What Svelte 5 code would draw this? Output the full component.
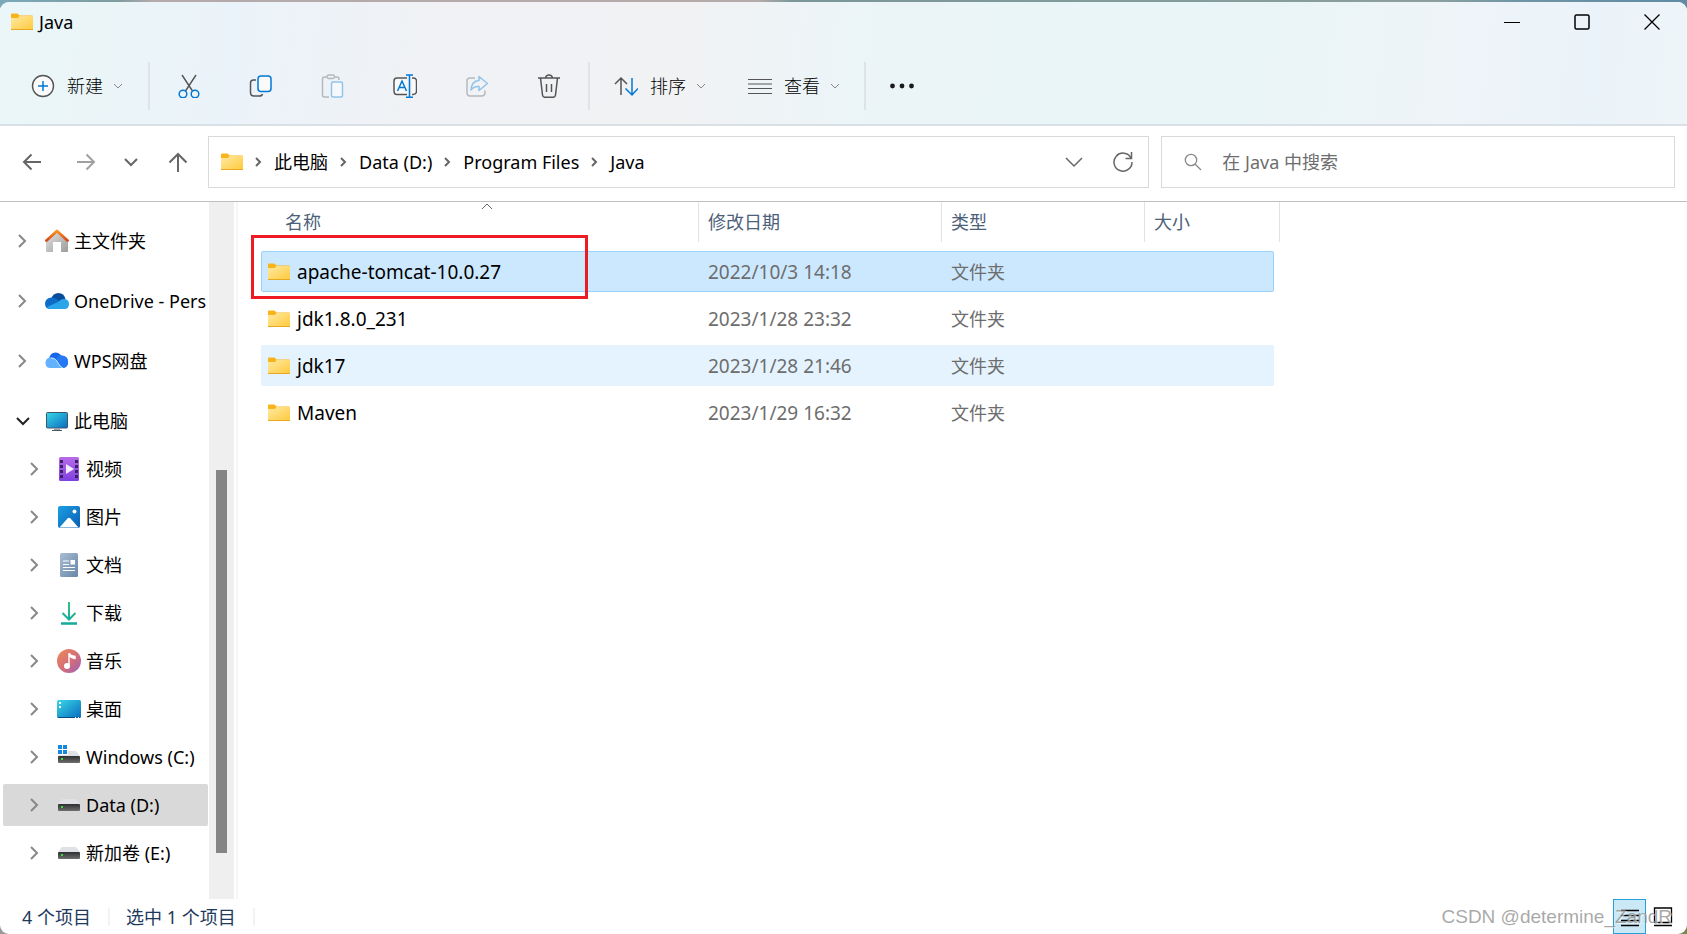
<script lang="ts">
  type TreeItem = {
    label: string;
    icon: string;
    child?: boolean;
    open?: boolean;
  };

  const tree: TreeItem[] = [
    { label: "主文件夹", icon: "home" },
    { label: "OneDrive - Pers", icon: "onedrive" },
    { label: "WPS网盘", icon: "wps" },
    { label: "此电脑", icon: "pc", open: true },
    { label: "视频", icon: "video", child: true },
    { label: "图片", icon: "picture", child: true },
    { label: "文档", icon: "document", child: true },
    { label: "下载", icon: "download", child: true },
    { label: "音乐", icon: "music", child: true },
    { label: "桌面", icon: "desktop", child: true },
    { label: "Windows (C:)", icon: "drive-win", child: true },
    { label: "Data (D:)", icon: "drive", child: true },
    { label: "新加卷 (E:)", icon: "drive", child: true },
  ];

  const files = [
    { name: "apache-tomcat-10.0.27", date: "2022/10/3 14:18", type: "文件夹" },
    { name: "jdk1.8.0_231", date: "2023/1/28 23:32", type: "文件夹" },
    { name: "jdk17", date: "2023/1/28 21:46", type: "文件夹" },
    { name: "Maven", date: "2023/1/29 16:32", type: "文件夹" },
  ];

  const crumbs = ["此电脑", "Data (D:)", "Program Files", "Java"];

  const actions = [
    { icon: "cut", label: "剪切" },
    { icon: "copy", label: "复制" },
    { icon: "paste", label: "粘贴", disabled: true },
    { icon: "rename", label: "重命名" },
    { icon: "share", label: "共享", disabled: true },
    { icon: "delete", label: "删除" },
  ];

  let current = $state("Data (D:)");
  let selected = $state("apache-tomcat-10.0.27");
  let hovered = $state("jdk17");
  let query = $state("");
</script>

{#snippet folder()}
  <svg class="folder" width="22" height="18" viewBox="0 0 22 18" aria-hidden="true">
    <path d="M0 1.5Q0 .5 1 .5H6.5L8.5 2.5H21Q22 2.5 22 3.5V6H0Z" fill="#f9b41c" />
    <path d="M0 5H7L8.500 3H22V17H0Z" fill="url(#g-folder)" />
    <path d="M0 16.500H22" stroke="#e9a820" />
  </svg>
{/snippet}

{#snippet chevron(dir: string)}
  <svg class="chev" width="14" height="14" viewBox="0 0 14 14" aria-hidden="true">
    {#if dir === "down"}
      <path d="M1 4L7 10L13 4" />
    {:else if dir === "small"}
      <path d="M3 5L7 9L11 5" stroke-width="1" />
    {:else}
      <path d="M3 1L9 7L3 13" />
    {/if}
  </svg>
{/snippet}

{#snippet icon(name: string)}
  <svg class="icon" width="24" height="24" viewBox="0 0 24 24" aria-hidden="true">
    {#if name === "new"}
      <circle cx="12" cy="12" r="10.500" fill="#fafafa" stroke="#555" stroke-width="1.400" />
      <path d="M12 7V17M7 12H17" stroke="#0078d4" stroke-width="1.500" />
    {:else if name === "cut"}
      <path d="M5 1L15.500 17M19 1L8.500 17" stroke="#555" stroke-width="1.400" />
      <circle cx="6" cy="20" r="3.800" stroke="#0078d4" stroke-width="1.500" />
      <circle cx="18" cy="20" r="3.800" stroke="#0078d4" stroke-width="1.500" />
    {:else if name === "copy"}
      <path d="M7 6H4.500Q1.500 6 1.500 9V18.500Q1.500 22 5 22H10.500Q13 22 13.500 20" stroke="#555" stroke-width="1.500" />
      <rect x="9" y="2" width="13" height="15.500" rx="3" fill="#fafafa" stroke="#0078d4" stroke-width="1.500" />
    {:else if name === "paste"}
      <path d="M6 3H3.500Q1.500 3 1.500 5V21Q1.500 23 3.500 23H8M13 3H16Q18 3 18 5V6" stroke="#b5b9bc" stroke-width="1.500" />
      <rect x="6" y="1" width="7.500" height="3.500" rx="1.700" stroke="#b5b9bc" stroke-width="1.300" />
      <rect x="10.500" y="8" width="11" height="15" rx="1.500" fill="#f6f9fb" stroke="#91c4ea" stroke-width="1.500" />
    {:else if name === "rename"}
      <path d="M14 4H4Q1 4 1 7V17Q1 20.500 4 20.500H14M19 4H20Q23.500 4 23.500 7V17Q23.500 20.500 20 20.500H19" fill="#fafafa" stroke="#555" stroke-width="1.500" />
      <path d="M4.500 17L9 7L13.500 17M6 13.500H12" stroke="#0078d4" stroke-width="1.500" />
      <path d="M16.500 1.500V23M13 1H20M13 23.300H20" stroke="#0078d4" stroke-width="1.500" />
    {:else if name === "share"}
      <path d="M10 4H5Q2 4 2 7V18.500Q2 22 5 22H16.500Q20 22 20 18.500V16.500" stroke="#b5b9bc" stroke-width="1.500" />
      <path d="M14 2.500L22.500 9.500L14 16.500V12.500Q9 12 6 16Q6.500 7 14 6.500Z" stroke="#91c4ea" stroke-width="1.500" stroke-linejoin="round" />
    {:else if name === "delete"}
      <path d="M1 4H23M8.500 4Q9 1 12 1Q15 1 15.500 4M3.500 4L5.500 21Q5.800 23.300 8 23.300H16Q18.200 23.300 18.500 21L20.500 4M9.500 10V18M14.500 10V18" stroke="#555" stroke-width="1.500" />
    {:else if name === "sort"}
      <path d="M7 21V4M1 10L7 4L13 10" stroke="#555" stroke-width="1.500" />
      <path d="M18 4V21M11.500 14.500L18 21L24 14.500" stroke="#0078d4" stroke-width="1.500" />
    {:else if name === "view"}
      <path d="M0 5.500H24M0 10H24M0 14.500H24M0 19.500H24" stroke="#555" stroke-width="1.200" />
    {:else if name === "home"}
      <path d="M1 11.500L12 2L23 11.500V22Q23 23 22 23H16V13H8V23H2Q1 23 1 22Z" fill="url(#g-home)" />
      <path d="M1.500 11.500L12 2L22.500 11.500" stroke="url(#g-roof)" stroke-width="2.800" stroke-linecap="round" stroke-linejoin="round" />
    {:else if name === "onedrive"}
      <path d="M6 10Q8 4 13.500 4Q19 4 20.500 10L14 14Z" fill="#0a4d9c" />
      <path d="M5.500 20Q0 20 0 14.500Q.5 9 6.500 8.500Q11 8.500 14 12L17 14L8 20Z" fill="#0e6cc8" />
      <path d="M13 13Q16 9.500 19.500 10Q24 10.500 24 15Q24 20 19.500 20H5.500Q3 20 2 18Z" fill="#2aa5ea" />
    {:else if name === "wps"}
      <path d="M4 10Q5 3.500 10.500 3.500Q14 3.500 16 6.500Q23 6.500 23 13Q23 18 18 19Z" fill="#1766e8" />
      <path d="M16 6.500Q23 6.500 23 13Q23 19 17 19Q14 18 11 9.500Q13 6.500 16 6.500Z" fill="#2378f4" />
      <path d="M5 8.500Q10 8 13 13.500Q15.500 18 18 19H5.500Q.5 19 .5 14Q.5 9 5 8.500Z" fill="#63b2ff" />
      <path d="M6 9Q11 9 13 14Q15 18 18 19" stroke="#e8f4ff" stroke-width=".8" />
    {:else if name === "pc"}
      <rect x="1.500" y="3.500" width="21" height="15.500" rx="1" fill="url(#g-screen)" stroke="#3d5669" />
      <path d="M9 19H15V21H9Z" fill="#9aa2a8" />
      <path d="M7 21.500H17" stroke="#4e5a63" />
    {:else if name === "video"}
      <rect x="2" y="0" width="20" height="24" rx="1.500" fill="url(#g-video)" />
      <path d="M4.500 3V22M19.500 3V22" stroke="#3c2164" stroke-width="3" stroke-dasharray="3 2" />
      <path d="M9 7L17 12L9 17Z" fill="#f4ecff" />
    {:else if name === "picture"}
      <rect x="1" y="1" width="22" height="22" rx="2" fill="url(#g-picture)" />
      <path d="M2.500 22.500L10.500 13.500Q12 12 13.500 13.500L21.500 22.500Z" fill="#fff" />
      <circle cx="17.500" cy="6.500" r="2" fill="#fff" />
    {:else if name === "document"}
      <rect x="3" y="0" width="18" height="24" rx="1.500" fill="url(#g-document)" />
      <path d="M6 8H12M6 11.500H12M6 14.500H18M6 17.500H18" stroke="#fff" stroke-width="1.200" />
      <rect x="13.500" y="7" width="4.500" height="4.500" fill="#fff" />
    {:else if name === "download"}
      <path d="M12 1V18M5.500 12L12 18.500L18.500 12M4 22.500H20" stroke="url(#g-download)" stroke-width="2" />
      <path d="M4 21.500H20V23.500H4Z" fill="#17ab99" />
    {:else if name === "music"}
      <circle cx="12" cy="12" r="12" fill="url(#g-music)" />
      <circle cx="10" cy="17" r="3" fill="#fff" />
      <path d="M12 4V17M12.500 4.500Q13 7 18 7.500V9.500Q14.500 9 12.500 7Z" fill="#fff" stroke="#fff" stroke-width="1.400" />
    {:else if name === "desktop"}
      <rect x="0" y="3" width="24" height="18" rx="1.500" fill="url(#g-screen)" />
      <path d="M1 20.500H23" stroke="#064a86" />
      <path d="M2 5H4V7H2ZM2 9H4V11H2ZM18 20H19V21H18ZM21 20H22V21H21Z" fill="#fff" />
    {:else if name === "drive" || name === "drive-win"}
      <path d="M5 6H19L23 11H1Z" fill="#dfe1e6" />
      <rect x="1" y="11" width="22" height="7" rx="1" fill="url(#g-drive)" />
      <rect x="4" y="13" width="2" height="2" fill="#36e03b" />
      {#if name === "drive-win"}
        <path d="M0 0H11V10H0Z" fill="#fff" />
        <path d="M1 0H5V4H1ZM6 0H10V4H6ZM1 5H5V9H1ZM6 5H10V9H6Z" fill="#1689dc" />
      {/if}
    {/if}
  </svg>
{/snippet}

<svg class="defs" width="0" height="0" aria-hidden="true">
  <defs>
    <linearGradient id="g-folder" x1="0" y1="0" x2="1" y2="1">
      <stop offset="0" stop-color="#ffe9a3" /><stop offset="1" stop-color="#ffca3a" />
    </linearGradient>
    <linearGradient id="g-home" x1="0" y1="0" x2="1" y2="1">
      <stop offset="0" stop-color="#e4e4e4" /><stop offset="1" stop-color="#9c9c9c" />
    </linearGradient>
    <linearGradient id="g-roof" x1="0" y1="0" x2="0" y2="1">
      <stop offset="0" stop-color="#f79320" /><stop offset="1" stop-color="#d8491a" />
    </linearGradient>
    <linearGradient id="g-screen" x1="0" y1="0" x2="1" y2="1">
      <stop offset="0" stop-color="#38d8e6" /><stop offset="1" stop-color="#0a6cc0" />
    </linearGradient>
    <linearGradient id="g-video" x1="0" y1="0" x2="0" y2="1">
      <stop offset="0" stop-color="#b76be8" /><stop offset="1" stop-color="#7f40e2" />
    </linearGradient>
    <linearGradient id="g-picture" x1="0" y1="0" x2="1" y2="1">
      <stop offset="0" stop-color="#1ba0e2" /><stop offset="1" stop-color="#0a5db4" />
    </linearGradient>
    <linearGradient id="g-document" x1="0" y1="0" x2="1" y2="1">
      <stop offset="0" stop-color="#a9bdd1" /><stop offset="1" stop-color="#6786a8" />
    </linearGradient>
    <linearGradient id="g-download" x1="0" y1="0" x2="0" y2="1">
      <stop offset="0" stop-color="#33c481" /><stop offset="1" stop-color="#0fa6a0" />
    </linearGradient>
    <linearGradient id="g-music" x1="0" y1="0" x2="1" y2="1">
      <stop offset="0" stop-color="#f08a54" /><stop offset=".6" stop-color="#cf6b7d" /><stop offset="1" stop-color="#9763c0" />
    </linearGradient>
    <linearGradient id="g-drive" x1="0" y1="0" x2="0" y2="1">
      <stop offset="0" stop-color="#2f2f2f" /><stop offset="1" stop-color="#6e6e6e" />
    </linearGradient>
  </defs>
</svg>

<div class="backdrop">
  <div class="window">
    <header class="chrome">
      <div class="titlebar">
        {@render folder()}
        <span class="title">Java</span>
        <div class="controls">
          <button aria-label="最小化">
            <svg width="16" height="16" viewBox="0 0 16 16"><path d="M0 8.500H16" /></svg>
          </button>
          <button aria-label="最大化">
            <svg width="16" height="16" viewBox="0 0 16 16"><rect x="1" y="1" width="14" height="14" rx="1.500" stroke-width="1.500" /></svg>
          </button>
          <button aria-label="关闭">
            <svg width="16" height="16" viewBox="0 0 16 16"><path d="M.5 .5L15.500 15.500M15.500 .5L.5 15.500" stroke-width="1.300" /></svg>
          </button>
        </div>
      </div>

      <div class="toolbar">
        <button class="menu new">{@render icon("new")}<span>新建</span>{@render chevron("small")}</button>
        <span class="sep"></span>
        <div class="actions">
          {#each actions as a (a.icon)}
            <button aria-label={a.label} disabled={a.disabled}>{@render icon(a.icon)}</button>
          {/each}
        </div>
        <span class="sep"></span>
        <button class="menu sort">{@render icon("sort")}<span>排序</span>{@render chevron("small")}</button>
        <button class="menu view">{@render icon("view")}<span>查看</span>{@render chevron("small")}</button>
        <span class="sep"></span>
        <button class="more" aria-label="更多">
          <svg width="24" height="6" viewBox="0 0 24 6">
            <circle cx="2.500" cy="3" r="2.400" /><circle cx="12" cy="3" r="2.400" /><circle cx="21.500" cy="3" r="2.400" />
          </svg>
        </button>
      </div>
    </header>

    <div class="navbar">
      <div class="history">
        <button aria-label="后退"><svg width="20" height="20" viewBox="0 0 20 20"><path d="M19 10H2M9.500 2.500L2 10L9.500 17.500" /></svg></button>
        <button aria-label="前进" disabled><svg width="20" height="20" viewBox="0 0 20 20"><path d="M1 10H18M10.500 2.500L18 10L10.500 17.500" /></svg></button>
        <button class="recent" aria-label="最近浏览的位置">{@render chevron("down")}</button>
        <button aria-label="向上"><svg width="20" height="20" viewBox="0 0 20 20"><path d="M10 20V2M1.500 10.500L10 2L18.500 10.500" /></svg></button>
      </div>

      <nav class="address" aria-label="地址栏">
        {@render folder()}
        {#each crumbs as crumb (crumb)}
          <svg class="crumb-sep" width="8" height="10" viewBox="0 0 8 10" aria-hidden="true"><path d="M2 1L6 5L2 9" /></svg>
          <a href="#{crumb}">{crumb}</a>
        {/each}
        <span class="fill"></span>
        <button aria-label="历史记录"><svg width="18" height="18" viewBox="0 0 18 18"><path d="M1 5L9 13L17 5" /></svg></button>
        <button aria-label="刷新"><svg width="20" height="20" viewBox="0 0 20 20"><path d="M18 6A9 9 0 1 0 19 10M18.500 0V6.500H12.500" /></svg></button>
      </nav>

      <label class="search">
        <svg width="18" height="18" viewBox="0 0 18 18" aria-hidden="true"><circle cx="7" cy="7" r="5.700" /><path d="M11 11L17 17" /></svg>
        <input type="text" aria-label="搜索" placeholder="在 Java 中搜索" bind:value={query} />
      </label>
    </div>

    <div class="body">
      <aside class="sidebar">
        <ul class="tree">
          {#each tree as item (item.label)}
            <li class:child={item.child} class:open={item.open}>
              <button class:current={item.label === current} onclick={() => (current = item.label)}>
                {@render chevron(item.open ? "down" : "right")}
                {@render icon(item.icon)}
                <span>{item.label}</span>
              </button>
            </li>
          {/each}
        </ul>
        <div class="scrollbar"><div class="thumb"></div></div>
      </aside>

      <main class="list">
        <table>
          <thead>
            <tr>
              <th>
                名称
                <svg class="sorted" width="12" height="7" viewBox="0 0 12 7" aria-hidden="true"><path d="M1 6L6 1L11 6" /></svg>
              </th>
              <th>修改日期</th>
              <th>类型</th>
              <th>大小</th>
            </tr>
          </thead>
          <tbody onmouseleave={() => (hovered = "")}>
            {#each files as f (f.name)}
              <tr
                class:selected={f.name === selected}
                class:hovered={f.name === hovered}
                onclick={() => (selected = f.name)}
                onmouseenter={() => (hovered = f.name)}
              >
                <td class="name">{@render folder()}{f.name}</td>
                <td class="date">{f.date}</td>
                <td>{f.type}</td>
                <td></td>
              </tr>
            {/each}
          </tbody>
        </table>
        <div class="callout"></div>
      </main>
    </div>

    <footer class="status">
      <span>4 个项目</span>
      <span>选中 1 个项目</span>
      <div class="modes">
        <button class="active" aria-label="详细信息">
          <svg width="20" height="20" viewBox="0 0 20 20"><path d="M1 3.500H19M1 8.500H19M1 13.500H19M1 18.500H19" /></svg>
        </button>
        <button aria-label="大图标">
          <svg width="20" height="20" viewBox="0 0 20 20"><path d="M1.500 1H18.500V15.500H1.500ZM1 18.500H19" /></svg>
        </button>
      </div>
    </footer>

    <div class="watermark">CSDN @determine_ZandR</div>
  </div>
</div>

<style>
  :global(body) {
    margin: 0;
  }

  .backdrop {
    display: flex;
    box-sizing: border-box;
    min-height: 100vh;
    padding-top: 2px;
    background:
      linear-gradient(90deg, #7aa9b8, #7f9ba0 7%, #b3aaa9 9%, #b3aaa9 45%, #7a9698 47%, #8ba09e 85%, #6f94a5 90%, #5f8ba3) top / 100% 20px no-repeat,
      linear-gradient(90deg, #999, #74894d);
    font-family: "Noto Sans", "Noto Sans CJK SC", sans-serif;
    font-size: 18px;
    line-height: 24px;
    color: #000;
  }

  .window {
    position: relative;
    flex: 1;
    min-width: 0;
    display: flex;
    flex-direction: column;
    border-radius: 9px;
    overflow: hidden;
    background: #fff;
  }

  .defs {
    position: absolute;
  }

  svg {
    flex: none;
    fill: none;
  }

  button {
    display: flex;
    align-items: center;
    margin: 0;
    padding: 0;
    border: 0;
    background: none;
    font: inherit;
    color: inherit;
  }

  .chev {
    stroke: #888;
    stroke-width: 2;
  }

  /* title bar and command bar */
  .chrome {
    border-bottom: 2px solid #d9e1e4;
    background: linear-gradient(97deg, #eaf6f8, #ebf5f8 7%, #ebf3fa 14%, #f0f2f5 25%, #f1f2f4 40%, #ebf5f8 52%, #e9f5f7 72%, #eef4f8 86%, #ebf3fa 94%, #edf5f8);
  }

  .titlebar {
    display: flex;
    align-items: center;
    height: 40px;
    padding-left: 11px;
  }

  .title {
    margin-left: 6px;
  }

  .controls {
    display: flex;
    margin-left: auto;
  }

  .controls button {
    justify-content: center;
    width: 70px;
    height: 40px;
  }

  .controls svg {
    stroke: #000;
  }

  .toolbar {
    display: flex;
    align-items: center;
    height: 76px;
    padding: 6px 0 0 31px;
    font-weight: 300;
  }

  .sep {
    width: 2px;
    height: 48px;
    background: #dde3e6;
  }

  .menu span {
    margin: 0 8px 0 12px;
  }

  .new {
    margin-right: 23px;
  }

  .actions {
    display: flex;
    padding: 0 3px;
  }

  .actions button {
    justify-content: center;
    width: 72px;
    height: 48px;
  }

  .sort {
    margin: 0 40px 0 24px;
  }

  .view {
    margin-right: 22px;
  }

  .more {
    margin-left: 24px;
  }

  .more svg {
    fill: #1a1a1a;
  }

  /* navigation row */
  .navbar {
    display: flex;
    align-items: center;
    height: 72px;
    padding: 0 12px 3px 0;
    border-bottom: 1px solid #bfbfbf;
  }

  .history {
    display: flex;
    align-items: center;
    width: 208px;
    flex: none;
  }

  .history button {
    margin-left: 22px;
  }

  .history button + button {
    margin-left: 34px;
  }

  .history .recent.recent {
    margin: 0 -4px 0 28px;
  }

  .history svg {
    stroke: #666;
    stroke-width: 2;
  }

  .history button:disabled svg {
    stroke: #a0a0a0;
  }

  .address,
  .search {
    display: flex;
    align-items: center;
    box-sizing: border-box;
    height: 52px;
    border: 1px solid #d9d9d9;
  }

  .address {
    flex: 913;
    padding: 0 15px 0 12px;
  }

  .address a {
    color: inherit;
    text-decoration: none;
    white-space: nowrap;
  }

  .crumb-sep {
    margin: 0 12px 0 11px;
    stroke: #666;
    stroke-width: 2;
  }

  .fill {
    flex: 1;
  }

  .address button {
    margin-left: 30px;
  }

  .address button svg {
    stroke: #666;
    stroke-width: 1.5;
  }

  .search {
    flex: 490;
    margin-left: 12px;
    padding-left: 22px;
  }

  .search svg {
    stroke: #888;
    stroke-width: 1.3;
  }

  .search input {
    flex: 1;
    min-width: 0;
    margin-left: 20px;
    padding: 0;
    border: 0;
    outline: 0;
    background: none;
    font: inherit;
  }

  .search input::placeholder {
    color: #6d6d6d;
    opacity: 1;
  }

  /* tree */
  .body {
    flex: 1;
    display: flex;
  }

  .sidebar {
    display: flex;
    width: 234px;
    flex: none;
    margin-right: 2px;
  }

  .tree {
    flex: 1;
    min-width: 0;
    margin: 0;
    padding: 18px 1px 0 3px;
    list-style: none;
  }

  .tree li {
    margin-bottom: 18px;
  }

  .tree .child,
  .tree .open {
    margin-bottom: 6px;
  }

  .tree button {
    width: 100%;
    height: 42px;
    padding-left: 13px;
    border-radius: 2px;
    white-space: nowrap;
  }

  .tree .child button {
    padding-left: 25px;
  }

  .tree .current {
    background: #d9d9d9;
  }

  .tree .icon {
    margin: 0 5px 0 15px;
  }

  .tree .open .chev {
    stroke: #222;
  }

  .scrollbar {
    display: flex;
    flex-direction: column;
    width: 25px;
    flex: none;
    background: #efefef;
  }

  .thumb {
    width: 11px;
    height: 55%;
    margin: auto 7px 46px;
    background: #858585;
  }

  /* file list */
  .list {
    position: relative;
    flex: 1;
    min-width: 0;
    padding-left: 23px;
    border-left: 2px solid #f6f6f6;
  }

  table,
  tbody {
    display: flex;
    flex-direction: column;
    align-items: flex-start;
  }

  tbody {
    gap: 6px;
    margin-top: 9px;
  }

  tr {
    display: grid;
    grid-template-columns: 438px 243px 203px 135px;
    align-items: center;
  }

  th {
    position: relative;
    height: 40px;
    box-sizing: border-box;
    padding: 8px 9px;
    border-right: 1px solid #e2e2e2;
    text-align: left;
    font-weight: 400;
    color: #4c607a;
  }

  th:first-child {
    padding-left: 24px;
  }

  .sorted {
    position: absolute;
    top: 1px;
    left: 220px;
    stroke: #666;
  }

  tbody tr {
    grid-template-columns: 436px 243px 203px 129px;
    height: 39px;
    border: 1px solid transparent;
    border-radius: 2px;
  }

  tr.hovered {
    background: #e5f3ff;
  }

  tr.selected {
    border-color: #99d1ff;
    background: #cce8ff;
  }

  td {
    padding: 0 10px;
    color: #6d6d6d;
  }

  td.name,
  td.date {
    font-size: 19px;
  }

  td.name {
    display: flex;
    align-items: center;
    gap: 7px;
    padding: 0 6px;
    color: #000;
  }

  .callout {
    position: absolute;
    top: 33px;
    left: 13px;
    box-sizing: border-box;
    width: 337px;
    height: 64px;
    border: 3px solid #ed1c24;
    pointer-events: none;
  }

  /* status bar */
  .status {
    display: flex;
    align-items: center;
    height: 35px;
    padding-left: 22px;
    color: #1e395b;
  }

  .status span {
    margin-right: 16px;
    padding-right: 17px;
    border-right: 2px solid #f3f3f3;
    line-height: 18px;
  }

  .modes {
    display: flex;
    align-self: stretch;
    margin-left: auto;
    padding-right: 8px;
  }

  .modes button {
    justify-content: center;
    box-sizing: border-box;
    width: 33px;
  }

  .modes .active {
    border: 1px solid #26a0da;
    background: #cbe8f6;
  }

  .modes svg {
    stroke: #000;
    stroke-width: 1.3;
  }

  .watermark {
    position: absolute;
    right: 15px;
    bottom: 5px;
    font-family: "Liberation Sans", sans-serif;
    font-size: 19px;
    color: rgba(140, 140, 140, 0.75);
    text-shadow: 1px 1px 0 rgba(255, 255, 255, 0.6);
    pointer-events: none;
  }
</style>
